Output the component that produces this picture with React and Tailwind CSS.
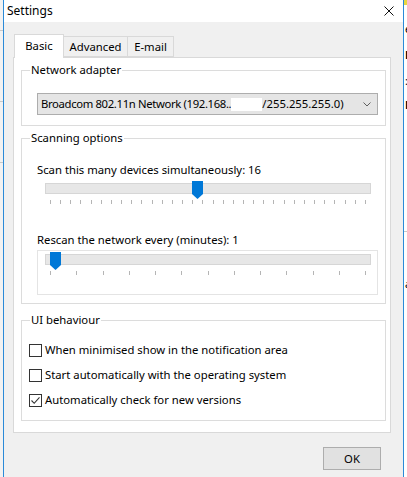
import React from 'react';

const GroupBox = ({ title, className = '', children }) => (
  <div className={`relative border border-[#dcdcdc] ${className}`}>
    <span className="absolute -top-[9px] left-[8px] bg-white px-[1px] leading-[16px]">{title}</span>
    {children}
  </div>
);

const Slider = ({ min, max, value, ticks, focused }) => {
  const left = 50 - 45 + ((value - min) / (max - min)) * 294;
  return (
    <div className={`w-[341px] h-[45px] border ${focused ? 'border-[#e4e4e4]' : 'border-transparent'}`}>
      <div className="relative ml-[7px] mt-[3px]">
        <div className="w-[326px] h-[11px] bg-[#e7e7e7] border border-[#d6d6d6]" />
        <svg
          className="absolute -top-[2px]"
          style={{ left: `${left}px` }}
          width="11"
          height="18"
          viewBox="0 0 11 18"
        >
          <polygon points="0,0 11,0 11,13 5.5,18 0,13" fill="#0078d7" />
        </svg>
        <div className="flex justify-between ml-[5px] w-[316px] mt-[6px]">
          {Array.from({ length: ticks }).map((_, i) => (
            <div key={i} className="w-px h-[4px] bg-[#b5b5b5]" />
          ))}
        </div>
      </div>
    </div>
  );
};

const Checkbox = ({ checked, label }) => (
  <div className="flex items-center h-[16px]">
    <div className="w-[13px] h-[13px] border border-[#333333] bg-white flex items-center justify-center">
      {checked && (
        <svg width="11" height="11" viewBox="0 0 11 11">
          <polyline points="1.5,5.5 4.2,8.3 9.5,2.3" fill="none" stroke="#333333" strokeWidth="1.1" />
        </svg>
      )}
    </div>
    <span className="ml-[3px]">{label}</span>
  </div>
);

export default function App() {
  return (
    <div className="flex w-[407px] h-[477px] overflow-hidden font-['Noto_Sans',sans-serif] text-[11.3px] text-black leading-[16px]">
      {/* background window, left */}
      <div className="w-[3px] h-full bg-[#f2f2f2] flex flex-col">
        <div className="h-[30px]" />
        <div className="h-px bg-[#c8c8c8]" />
        <div className="h-[70px]" />
        <div className="h-px bg-[#c8c8c8]" />
        <div className="h-[60px]" />
        <div className="h-px bg-[#c8c8c8]" />
      </div>

      {/* dialog */}
      <div className="w-[401px] h-full border-x border-[#2b8ad8] flex flex-col bg-[#f0f0f0]">
        {/* title bar */}
        <div className="h-[22px] bg-white flex items-center justify-between pl-[3px] pr-[9px]">
          <span className="text-[12px]">Settings</span>
          <svg width="10" height="10" viewBox="0 0 10 10">
            <path d="M0.5 0.5 L9.5 9.5 M9.5 0.5 L0.5 9.5" stroke="#111" strokeWidth="1" />
          </svg>
        </div>

        <div className="pl-[9px] pt-[11px]">
          {/* tabs */}
          <div className="flex items-end h-[24px] pl-[1px]">
            <div className="relative z-10 w-[50px] h-[24px] bg-white border border-b-0 border-[#d9d9d9] -mb-px flex items-center justify-center pb-[2px]">
              Basic
            </div>
            <div className="w-[64px] h-[21px] bg-[#f0f0f0] border border-l-0 border-[#d9d9d9] flex items-center justify-center">
              Advanced
            </div>
            <div className="w-[46px] h-[21px] bg-[#f0f0f0] border border-l-0 border-[#d9d9d9] flex items-center justify-center">
              E-mail
            </div>
          </div>

          {/* tab panel */}
          <div className="w-[378px] h-[376px] bg-white border border-[#d9d9d9] pl-[7px] pt-[12px]">
            <GroupBox title="Network adapter" className="w-[365px] h-[56px] pl-[15px] pt-[22px]">
              <div className="w-[341px] h-[22px] bg-[#e5e5e5] border border-[#adadad] flex items-center pl-[3px] pr-[6px]">
                <span className="flex-1 flex items-center whitespace-nowrap overflow-hidden">
                  <span className="tracking-[-0.35px]">Broadcom 802.11n Network (192.168..</span>
                  <span className="inline-block w-[31px] h-[13px] bg-white" />
                  /255.255.255.0)
                </span>
                <svg className="shrink-0" width="8" height="5" viewBox="0 0 8 5">
                  <polyline points="0.5,0.5 4,4 7.5,0.5" fill="none" stroke="#5f5f5f" strokeWidth="1" />
                </svg>
              </div>
            </GroupBox>

            <GroupBox title="Scanning options" className="w-[365px] h-[166px] mt-[12px] pl-[15px] pt-[23px]">
              <div className="h-[16px]">Scan this many devices simultaneously: 16</div>
              <div className="mt-[1px]">
                <Slider min={1} max={32} value={16} ticks={32} />
              </div>
              <div className="h-[16px] mt-[8px]">Rescan the network every (minutes): 1</div>
              <div className="mt-[2px]">
                <Slider min={1} max={13} value={1} ticks={13} focused />
              </div>
            </GroupBox>

            <GroupBox title="UI behaviour" className="w-[365px] h-[101px] mt-[16px] pl-[7px] pt-[21px]">
              <div className="flex flex-col gap-[9px]">
                <Checkbox label="When minimised show in the notification area" />
                <Checkbox label="Start automatically with the operating system" />
                <Checkbox checked label="Automatically check for new versions" />
              </div>
            </GroupBox>
          </div>

          {/* footer */}
          <div className="flex justify-end w-[378px] pr-[10px] mt-[14px]">
            <button className="w-[58px] h-[23px] bg-[#e1e1e1] border border-[#adadad] flex items-center justify-center">
              OK
            </button>
          </div>
        </div>
      </div>

      {/* background window, right */}
      <div className="w-[3px] h-full bg-white flex flex-col overflow-hidden text-[11px] leading-[12px]">
        <div className="h-[5px] bg-[#e8d840]" />
        <div className="h-[18px]" />
        <div className="pl-[1px]">é</div>
        <div className="h-[14px]" />
        <div className="pl-[1px] font-bold">E</div>
        <div className="h-[14px]" />
        <div className="pl-[1px]">:</div>
        <div className="h-[12px]" />
        <div className="pl-[1px] font-bold">M</div>
        <div className="h-[120px]" />
        <div className="h-px bg-[#c8c8c8]" />
        <div className="h-[46px]" />
        <div className="pl-[1px]">a</div>
      </div>
    </div>
  );
}
